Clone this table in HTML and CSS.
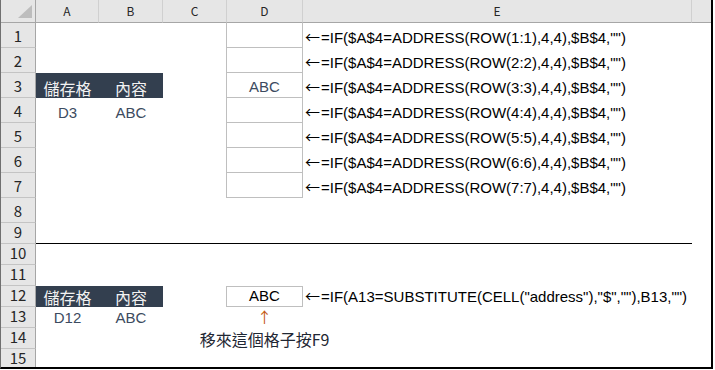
FILE: index.html
```html
<!DOCTYPE html>
<html>
	<head>
		<meta charset="UTF-8">
		<title>ADDRESS 與 CELL</title>
		<link rel="stylesheet" href="styles.css">
	</head>
	<body>
		<div class="sheet">
			<table class="grid">
				<colgroup>
					<col class="c-rh">
					<col class="c-a">
					<col class="c-b">
					<col class="c-c">
					<col class="c-d">
					<col class="c-e">
					<col class="c-f">
				</colgroup>
				<tr class="head">
					<th class="corner">
						<svg width="34" height="22" viewBox="0 0 34 22"><polygon points="31,5 31,18 17,18" fill="#bdbdbd"/></svg>
					</th>
					<th>A</th>
					<th>B</th>
					<th class="no-sep">C</th>
					<th class="col-d">D</th>
					<th>E</th>
					<th class="last"></th>
				</tr>
				<tr class="tall">
					<th class="rh">1</th>
					<td></td><td></td><td></td>
					<td class="box"></td>
					<td class="fx"><span class="arr">←</span>=IF($A$4=ADDRESS(ROW(1:1),4,4),$B$4,"")</td>
					<td></td>
				</tr>
				<tr class="tall">
					<th class="rh">2</th>
					<td></td><td></td><td></td>
					<td class="box"></td>
					<td class="fx"><span class="arr">←</span>=IF($A$4=ADDRESS(ROW(2:2),4,4),$B$4,"")</td>
					<td></td>
				</tr>
				<tr class="tall">
					<th class="rh">3</th>
					<td class="label">儲存格</td>
					<td class="label">內容</td>
					<td></td>
					<td class="box val">ABC</td>
					<td class="fx"><span class="arr">←</span>=IF($A$4=ADDRESS(ROW(3:3),4,4),$B$4,"")</td>
					<td></td>
				</tr>
				<tr class="tall">
					<th class="rh">4</th>
					<td class="val">D3</td>
					<td class="val">ABC</td>
					<td></td>
					<td class="box"></td>
					<td class="fx"><span class="arr">←</span>=IF($A$4=ADDRESS(ROW(4:4),4,4),$B$4,"")</td>
					<td></td>
				</tr>
				<tr class="tall">
					<th class="rh">5</th>
					<td></td><td></td><td></td>
					<td class="box"></td>
					<td class="fx"><span class="arr">←</span>=IF($A$4=ADDRESS(ROW(5:5),4,4),$B$4,"")</td>
					<td></td>
				</tr>
				<tr class="tall">
					<th class="rh">6</th>
					<td></td><td></td><td></td>
					<td class="box"></td>
					<td class="fx"><span class="arr">←</span>=IF($A$4=ADDRESS(ROW(6:6),4,4),$B$4,"")</td>
					<td></td>
				</tr>
				<tr class="tall">
					<th class="rh">7</th>
					<td></td><td></td><td></td>
					<td class="box"></td>
					<td class="fx"><span class="arr">←</span>=IF($A$4=ADDRESS(ROW(7:7),4,4),$B$4,"")</td>
					<td></td>
				</tr>
				<tr class="tall">
					<th class="rh">8</th>
					<td></td><td></td><td></td><td></td><td></td><td></td>
				</tr>
				<!-- 分隔線：上面是 ADDRESS 版，下面是 CELL 版 -->
				<tr class="short cut">
					<th class="rh">9</th>
					<td></td><td></td><td></td><td></td><td></td><td class="keep"></td>
				</tr>
				<tr class="short">
					<th class="rh">10</th>
					<td></td><td></td><td></td><td></td><td></td><td></td>
				</tr>
				<tr class="short">
					<th class="rh">11</th>
					<td></td><td></td><td></td><td></td><td></td><td></td>
				</tr>
				<tr class="short">
					<th class="rh">12</th>
					<td class="label">儲存格</td>
					<td class="label">內容</td>
					<td></td>
					<td class="box box-single">ABC</td>
					<td class="fx"><span class="arr">←</span>=IF(A13=SUBSTITUTE(CELL("address"),"$",""),B13,"")</td>
					<td></td>
				</tr>
				<tr class="short">
					<th class="rh">13</th>
					<td class="val">D12</td>
					<td class="val">ABC</td>
					<td></td>
					<td class="up"><span class="arr">↑</span></td>
					<td></td><td></td>
				</tr>
				<tr class="short">
					<th class="rh">14</th>
					<td></td><td></td><td></td>
					<td class="note"><span>移來這個格子按F9</span></td>
					<td></td><td></td>
				</tr>
				<tr class="short">
					<th class="rh">15</th>
					<td></td><td></td><td></td><td></td><td></td><td></td>
				</tr>
			</table>
		</div>
	</body>
</html>
```

FILE: styles.css
```css
* {
	margin: 0;
	padding: 0;
}
body {
	background: #fff;
	font-family: "Liberation Sans", "Noto Sans CJK TC", sans-serif;
}
/* 外框：右邊和下面是黑色粗線 */
.sheet {
	width: 713px;
	height: 369px;
	overflow: hidden;
	box-sizing: border-box;
	border-left: 1px solid #707070;
	border-right: 2px solid #000;
	border-bottom: 2px solid #000;
}
.grid {
	table-layout: fixed;
	border-collapse: separate;
	border-spacing: 0;
	width: 710px;
}
.c-rh { width: 35px; }
.c-a { width: 63px; }
.c-b { width: 64px; }
.c-c { width: 63px; }
.c-d { width: 77px; }
.c-e { width: 389px; }
.c-f { width: 19px; }

td, th {
	box-sizing: border-box;
	white-space: nowrap;
	font-size: 15px;
	font-weight: normal;
	line-height: 18px;
	vertical-align: bottom;
	padding: 0 0 1px 0;
}

/* 欄標題列 */
.head {
	height: 23px;
}
.head th {
	background: #e6e6e6;
	border-right: 1px solid #d0d0d0;
	border-bottom: 1px solid #a6a6a6;
	color: #262626;
	font-family: "Noto Sans CJK TC", sans-serif;
	font-size: 12px;
	line-height: 22px;
	vertical-align: middle;
	padding: 0;
}
.head th.corner {
	border-right-color: #a6a6a6;
}
.corner svg {
	display: block;
}
.head th.no-sep {
	border-right: none;
}
.head th.col-d {
	border-left: 1px solid #d0d0d0;
}
.head th.last {
	border-right: none;
}

/* 列號 */
.tall { height: 25px; }
.short { height: 21px; }
.rh {
	background: #e6e6e6;
	border-right: 1px solid #a6a6a6;
	border-bottom: 1px solid #c4c4c4;
	color: #262626;
	font-family: "Noto Sans CJK TC", sans-serif;
	font-size: 15px;
	line-height: 18px;
	padding-bottom: 2px;
}

/* 儲存格內容 */
.label {
	background: #333f4f;
	color: #f2f2f2;
	font-family: "Noto Sans CJK TC", sans-serif;
	font-size: 16px;
	text-align: center;
}
.val {
	color: #3c4b60;
	text-align: center;
}
.fx {
	color: #000;
	padding-left: 2px;
}
/* 箭頭用中文字型，才會是細長的 */
.arr {
	font-family: "Noto Sans CJK TC", sans-serif;
	font-size: 15px;
	line-height: 18px;
	margin-right: 1px;
}
.box {
	border-left: 1px solid #bfbfbf;
	border-right: 1px solid #bfbfbf;
	border-bottom: 1px solid #bfbfbf;
}
.box-single {
	border-top: 1px solid #bfbfbf;
	color: #000;
	text-align: center;
}
.cut td {
	border-bottom: 1px solid #000;
}
.cut td.keep {
	border-bottom: none;
}
.up {
	color: #c55a11;
	text-align: center;
}
.up .arr {
	margin-right: 0;
}
/* 文字比格子寬，讓它往兩邊溢出 */
.note span {
	display: flex;
	justify-content: center;
	color: #1f2733;
	font-family: "Noto Sans CJK TC", sans-serif;
	font-size: 16px;
}
```
